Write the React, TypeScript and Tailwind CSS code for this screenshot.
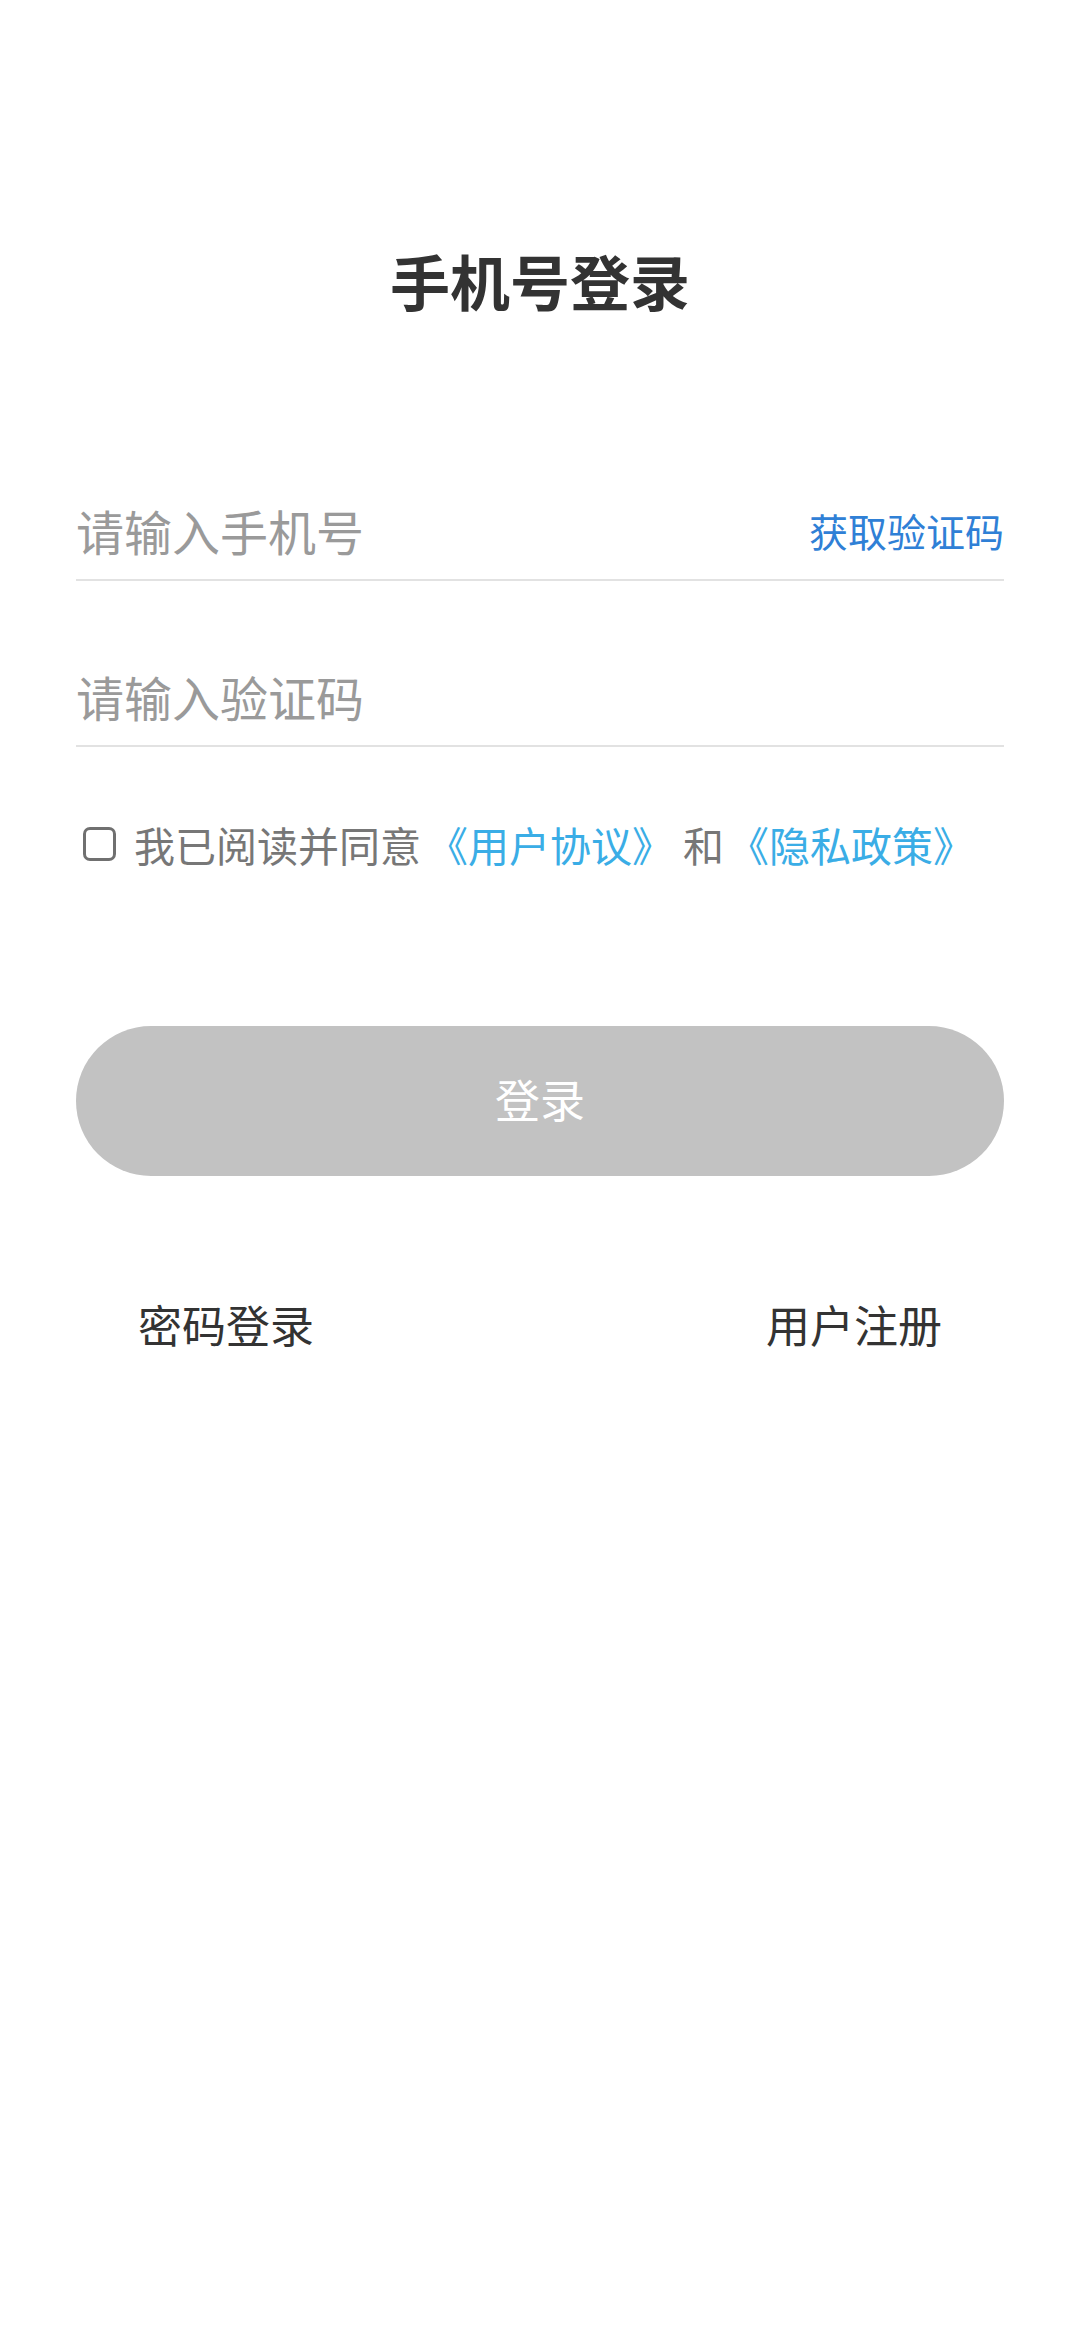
import React, { useState } from "react";

const font = { fontFamily: '"Noto Sans CJK SC", "Noto Sans", sans-serif' };

export default function App() {
  const [phone, setPhone] = useState("");
  const [code, setCode] = useState("");
  const [agreed, setAgreed] = useState(false);

  return (
    <div className="min-h-[2340px] w-[1080px] bg-white" style={font}>
      <div className="flex flex-col px-[76px] pt-[250px]">
        {/* Title */}
        <h1 className="text-center text-[60px] font-bold leading-[60px] text-[#333333]">手机号登录</h1>

        {/* Phone input */}
        <div className="mt-[180px] flex h-[91px] items-center border-b-2 border-[#e2e2e2] pb-[9px]">
          <input
            value={phone}
            onChange={(e) => setPhone(e.target.value)}
            placeholder="请输入手机号"
            className="min-w-0 flex-1 bg-transparent text-[48px] leading-[60px] text-[#333] outline-none placeholder:text-[#9a9a9a]"
          />
          <button className="text-[39px] leading-[48px] text-[#2f80d6]">获取验证码</button>
        </div>

        {/* Code input */}
        <div className="mt-[75px] flex h-[91px] items-center border-b-2 border-[#e2e2e2] pb-[9px]">
          <input
            value={code}
            onChange={(e) => setCode(e.target.value)}
            placeholder="请输入验证码"
            className="min-w-0 flex-1 bg-transparent text-[48px] leading-[60px] text-[#333] outline-none placeholder:text-[#9a9a9a]"
          />
        </div>

        {/* Agreement */}
        <div className="mt-[79px] flex h-[36px] items-center pl-[7px]">
          <button
            onClick={() => setAgreed(!agreed)}
            className="h-[34px] w-[33px] shrink-0 rounded-[7px] border-[3px] border-[#707070]"
          />
          <p className="ml-[18px] whitespace-nowrap text-[41px] leading-[41px] text-[#777777]">
            我已阅读并同意
            <span className="ml-[6px] text-[#3aade6]">《用户协议》</span>
            <span className="ml-[10px] mr-[4px]">和</span>
            <span className="text-[#3aade6]">《隐私政策》</span>
          </p>
        </div>

        {/* Login button */}
        <button className="mt-[164px] h-[150px] w-full rounded-full bg-[#c2c2c2] pb-[6px] text-[45px] leading-[45px] text-white">
          登录
        </button>

        {/* Bottom links */}
        <div className="mt-[126px] flex justify-between px-[62px]">
          <span className="text-[44px] leading-[44px] text-[#333333]">密码登录</span>
          <span className="text-[44px] leading-[44px] text-[#333333]">用户注册</span>
        </div>
      </div>
    </div>
  );
}
